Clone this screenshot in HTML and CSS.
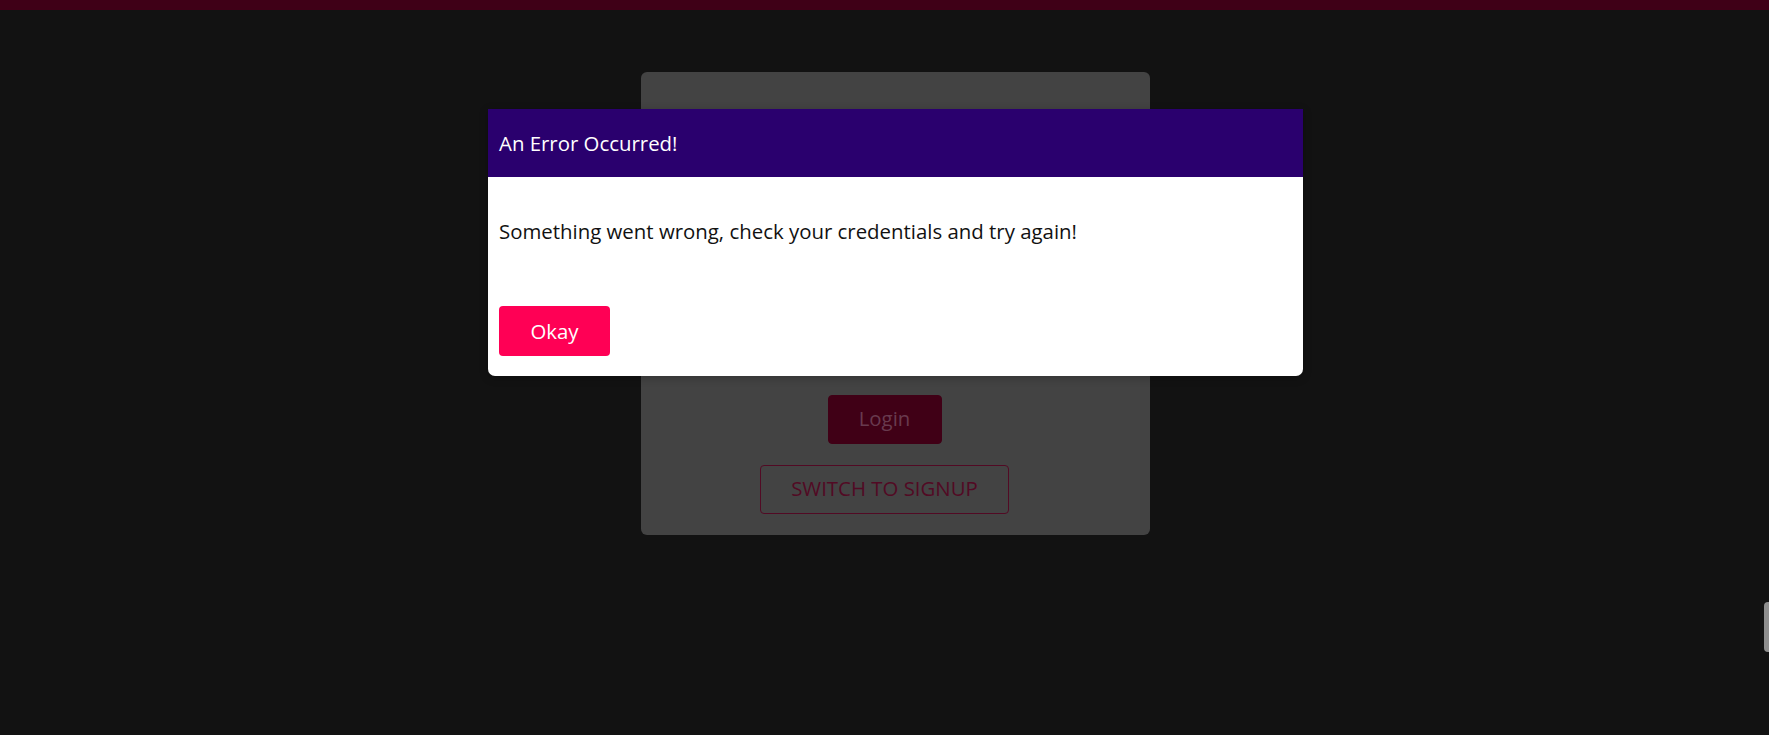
FILE: index.html
```html
<!DOCTYPE html>
<html lang="en">
<head>
<meta charset="utf-8">
<title>Login</title>
<link rel="stylesheet" href="styles.css">
</head>
<body>
  <header class="topbar"></header>
  <main class="page">
    <section class="auth-card">
      <div class="auth-actions">
        <button class="btn btn-solid" type="button">Login</button>
        <button class="btn btn-outline" type="button">SWITCH TO SIGNUP</button>
      </div>
    </section>
  </main>

  <div class="modal" role="dialog">
    <header class="modal-header">
      <h2 class="modal-title">An Error Occurred!</h2>
    </header>
    <div class="modal-content">
      <p class="modal-text">Something went wrong, check your credentials and try again!</p>
    </div>
    <footer class="modal-footer">
      <button class="btn-okay" type="button">Okay</button>
    </footer>
  </div>

  <div class="scroll-thumb"></div>
</body>
</html>
```

FILE: styles.css
```css
* { box-sizing: border-box; }

html, body {
  margin: 0;
  padding: 0;
  height: 100%;
}

body {
  background: #121212;
  font-family: "Open Sans", "Noto Sans", "Liberation Sans", sans-serif;
  overflow: hidden;
}

.topbar {
  height: 10px;
  background: #3f0017;
}

.page {
  display: flex;
  justify-content: center;
  padding-top: 62px;
}

.auth-card {
  width: 509px;
  height: 463px;
  margin-left: 21px;
  background: #434343;
  border-radius: 6px;
  display: flex;
  flex-direction: column;
  justify-content: flex-end;
  padding: 0 37px 21px 16px;
}

.auth-actions {
  display: flex;
  flex-direction: column;
  align-items: center;
  gap: 21px;
}

.btn {
  font-family: inherit;
  font-size: 20.4px;
  line-height: 25px;
  height: 49px;
  border-radius: 4px;
  padding: 0 0 2px;
  cursor: pointer;
}

.btn-solid {
  background: #400016;
  border: 1px solid #400016;
  color: #683a4e;
  width: 114px;
}

.btn-outline {
  background: transparent;
  border: 1px solid #520a24;
  color: #520a24;
  width: 249px;
}

.modal {
  position: absolute;
  top: 109px;
  left: 488px;
  width: 815px;
  background: #ffffff;
  border-radius: 0 0 7px 7px;
  box-shadow: 0 2px 8px rgba(0, 0, 0, 0.26);
  overflow: hidden;
}

.modal-header {
  height: 68px;
  background: #2a006e;
  color: #ffffff;
  display: flex;
  align-items: center;
  padding: 0 11px;
}

.modal-title {
  margin: 0;
  font-size: 20.4px;
  font-weight: 400;
  line-height: 27px;
}

.modal-content {
  padding: 41px 11px 0;
}

.modal-text {
  margin: 0;
  font-size: 20.4px;
  line-height: 27px;
  color: #111111;
}

.modal-footer {
  padding: 61px 11px 20px;
}

.btn-okay {
  font-family: inherit;
  font-size: 20.4px;
  line-height: 27px;
  width: 111px;
  height: 50px;
  padding: 0;
  border: 0;
  border-radius: 4px;
  background: #ff0055;
  color: #ffffff;
  cursor: pointer;
}

.scroll-thumb {
  position: absolute;
  left: 1764px;
  top: 602px;
  width: 10px;
  height: 50px;
  border-radius: 4px;
  background: #8e8e8e;
}
```
